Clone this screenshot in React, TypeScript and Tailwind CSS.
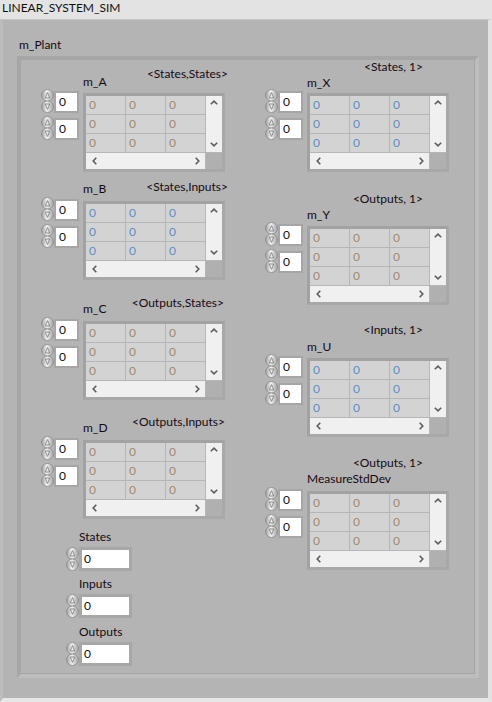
import React from "react";

function Spinner() {
  return (
    <svg width="13" height="24" viewBox="0 0 13 24" className="block shrink-0">
      <defs>
        <linearGradient id="spg" x1="0" y1="0" x2="1" y2="0">
          <stop offset="0" stopColor="#9a9a9a" />
          <stop offset="0.45" stopColor="#f2f2f2" />
          <stop offset="1" stopColor="#a0a0a0" />
        </linearGradient>
      </defs>
      <rect x="0.5" y="0.5" width="12" height="11.5" rx="6" fill="url(#spg)" stroke="#8c8c8c" strokeWidth="0.8" />
      <rect x="0.5" y="12" width="12" height="11.5" rx="6" fill="url(#spg)" stroke="#8c8c8c" strokeWidth="0.8" />
      <path d="M4.2 9 L6.5 3.6 L8.8 9 Z" fill="none" stroke="#7a7a7a" strokeWidth="0.8" />
      <path d="M4.2 15 L6.5 20.4 L8.8 15 Z" fill="none" stroke="#7a7a7a" strokeWidth="0.8" />
    </svg>
  );
}

function ChevUp() {
  return (
    <svg width="8" height="5" viewBox="0 0 8 5" className="block">
      <polyline points="0.8,4.3 4,1.2 7.2,4.3" fill="none" stroke="#5c5c5c" strokeWidth="1.6" />
    </svg>
  );
}
function ChevDown() {
  return (
    <svg width="8" height="5" viewBox="0 0 8 5" className="block">
      <polyline points="0.8,0.7 4,3.8 7.2,0.7" fill="none" stroke="#5c5c5c" strokeWidth="1.6" />
    </svg>
  );
}
function ChevLeft() {
  return (
    <svg width="5" height="8" viewBox="0 0 5 8" className="block">
      <polyline points="4.3,0.8 1.2,4 4.3,7.2" fill="none" stroke="#5c5c5c" strokeWidth="1.6" />
    </svg>
  );
}
function ChevRight() {
  return (
    <svg width="5" height="8" viewBox="0 0 5 8" className="block">
      <polyline points="0.7,0.8 3.8,4 0.7,7.2" fill="none" stroke="#5c5c5c" strokeWidth="1.6" />
    </svg>
  );
}

function IndexBox() {
  return (
    <div className="flex items-end h-[24px]">
      <Spinner />
      <div className="w-[25px] h-[22px] border-[2px] border-[#a6a6a6] bg-[#a6a6a6]">
        <div className="w-[21px] h-[18px] bg-white pl-[3px] text-[12px] leading-[18px] text-[#101010]">0</div>
      </div>
    </div>
  );
}

function ArrayGrid({ blue }: { blue: boolean }) {
  const c = blue ? "text-[#5d8fc4]" : "text-[#a08a70]";
  const cell = `bg-[#d3d3d3] pl-[3px] text-[12px] leading-[18px] ${c}`;
  return (
    <div className="w-[142px] h-[79px] border-[3px] border-t-[#a2a2a2] border-l-[#a2a2a2] border-b-[#a8a8a8] border-r-[#a8a8a8] bg-[#b6b6b6]">
      <div className="grid grid-cols-[39px_39px_39px_16px] grid-rows-[18px_18px_18px_16px] gap-px">
        <div className={cell}>0</div>
        <div className={cell}>0</div>
        <div className={cell}>0</div>
        <div className="row-span-3 bg-[#f0f0f0] flex flex-col items-center justify-between pt-[4px] pb-[5px]">
          <ChevUp />
          <ChevDown />
        </div>
        <div className={cell}>0</div>
        <div className={cell}>0</div>
        <div className={cell}>0</div>
        <div className={cell}>0</div>
        <div className={cell}>0</div>
        <div className={cell}>0</div>
        <div className="col-span-3 bg-[#f0f0f0] flex items-center justify-between pl-[6px] pr-[5px]">
          <ChevLeft />
          <ChevRight />
        </div>
        <div className="bg-[#b0b0b0]" />
      </div>
    </div>
  );
}

function ArrayBlock({
  label,
  dim,
  blockCls,
  headerCls,
  labelCls,
  dimCls,
  blue,
}: {
  label: string;
  dim: string;
  blockCls: string;
  headerCls: string;
  labelCls: string;
  dimCls: string;
  blue: boolean;
}) {
  return (
    <div className={blockCls}>
      <div className={`flex ${headerCls}`}>
        <div className={`ml-[42px] w-0 leading-[13px] whitespace-nowrap ${labelCls}`}>{label}</div>
        <div className={`ml-auto leading-[13px] whitespace-nowrap ${dimCls}`}>{dim}</div>
      </div>
      <div className="flex">
        <div className="flex flex-col gap-[3px]">
          <IndexBox />
          <IndexBox />
        </div>
        <div className="ml-[4px] mt-[4px]">
          <ArrayGrid blue={blue} />
        </div>
      </div>
    </div>
  );
}

function NumericBlock({ label, cls }: { label: string; cls: string }) {
  return (
    <div className={cls}>
      <div className="ml-[38px] leading-[13px]">{label}</div>
      <div className="flex mt-[4px] ml-[25px]">
        <Spinner />
        <div className="w-[53px] h-[24px] border-[3px] border-[#a7a7a7] bg-white pl-[2px] text-[12px] leading-[18px] text-[#101010]">
          0
        </div>
      </div>
    </div>
  );
}

export default function App() {
  return (
    <div className="w-[492px] h-[702px] overflow-hidden font-['Lato','Liberation_Sans',sans-serif] text-[12px] text-[#140a12]">
      <div className="h-[19px] bg-[#e3e3e3] pl-[2px] leading-[16px] text-[12px] text-[#101010]">LINEAR_SYSTEM_SIM</div>
      <div className="h-[683px] bg-[#b4b4b4] border-t-[1px] border-t-[#c6c6c6] border-l-[3px] border-l-[#bdbdbd] border-r-[4px] border-r-[#e2e2e2] border-b-[4px] border-b-[#e6e6e6] pt-[18px]">
        <div className="ml-[16px] leading-[13px]">m_Plant</div>
        <div className="ml-[14px] mt-[5px] w-[462px] h-[622px] border-[4px] border-t-[#a6a6a6] border-l-[#a6a6a6] border-b-[#bdbdbd] border-r-[#bdbdbd] shadow-[inset_-1px_-1px_0_#a4a4a4] flex pl-[20px]">
          <div className="w-[224px] flex flex-col">
            <ArrayBlock label="m_A" dim="<States,States>" blockCls="mt-[7px]" headerCls="h-[22px]" labelCls="mt-[8px]" dimCls="mr-[37px]" blue={false} />
            <ArrayBlock label="m_B" dim="<States,Inputs>" blockCls="mt-[8px]" headerCls="h-[17px]" labelCls="mt-[2px]" dimCls="mr-[37px]" blue={true} />
            <ArrayBlock label="m_C" dim="<Outputs,States>" blockCls="mt-[16px]" headerCls="h-[21px]" labelCls="mt-[6px]" dimCls="mr-[41px]" blue={false} />
            <ArrayBlock label="m_D" dim="<Outputs,Inputs>" blockCls="mt-[15px]" headerCls="h-[21px]" labelCls="mt-[6px]" dimCls="mr-[40px]" blue={false} />
            <NumericBlock label="States" cls="mt-[11px]" />
            <NumericBlock label="Inputs" cls="mt-[6px]" />
            <NumericBlock label="Outputs" cls="mt-[7px]" />
          </div>
          <div className="w-[186px] flex flex-col">
            <ArrayBlock label="m_X" dim="<States, 1>" blockCls="mt-0" headerCls="h-[29px]" labelCls="mt-[16px]" dimCls="mr-[28px]" blue={true} />
            <ArrayBlock label="m_Y" dim="<Outputs, 1>" blockCls="mt-[20px]" headerCls="h-[30px]" labelCls="mt-[16px]" dimCls="mr-[28px]" blue={false} />
            <ArrayBlock label="m_U" dim="<Inputs, 1>" blockCls="mt-[18px]" headerCls="h-[31px]" labelCls="mt-[17px]" dimCls="mr-[28px]" blue={true} />
            <ArrayBlock label="MeasureStdDev" dim="<Outputs, 1>" blockCls="mt-[19px]" headerCls="h-[31px]" labelCls="mt-[16px]" dimCls="mr-[28px]" blue={false} />
          </div>
        </div>
      </div>
    </div>
  );
}
